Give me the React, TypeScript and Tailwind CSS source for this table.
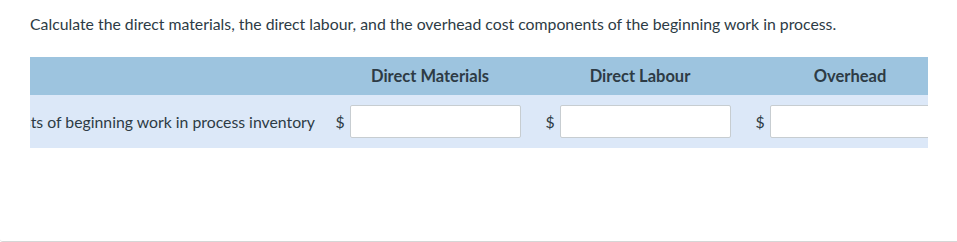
export default function App() {
  const cols = ["Direct Materials", "Direct Labour", "Overhead"]

  return (
    <div className="w-[957px] h-[242px] bg-white border-b border-[#d6d6d6] rounded-bl-[3px] font-['Lato',sans-serif] text-[#2d3b45] overflow-hidden">
      <p className="pt-[13px] pl-[30px] text-[15.8px] leading-[22px]">
        Calculate the direct materials, the direct labour, and the overhead cost components of the beginning work in process.
      </p>
      <div className="ml-[30px] mt-[22px] w-[898px] overflow-hidden">
        <div className="flex h-[38px] bg-[#9dc4df] items-center w-[925px]">
          <div className="w-[295px] shrink-0"></div>
          {cols.map((c) => (
            <div key={c} className="w-[210px] shrink-0 text-center font-bold text-[16.5px]">
              {c}
            </div>
          ))}
        </div>
        <div className="flex h-[53px] bg-[#dce8f8] items-center w-[925px]">
          <div className="w-[295px] shrink-0 flex justify-end overflow-hidden pr-[10px] text-[15.8px] whitespace-nowrap">
            Costs of beginning work in process inventory
          </div>
          {cols.map((c) => (
            <div key={c} className="w-[210px] shrink-0 flex items-center pl-[6px]">
              <span className="w-[18px] text-center text-[15.8px]">$</span>
              <input
                type="text"
                className="ml-[1px] w-[171px] h-[33px] bg-white border border-[#c7cdd1] rounded-[2px]"
              />
            </div>
          ))}
        </div>
      </div>
    </div>
  )
}
